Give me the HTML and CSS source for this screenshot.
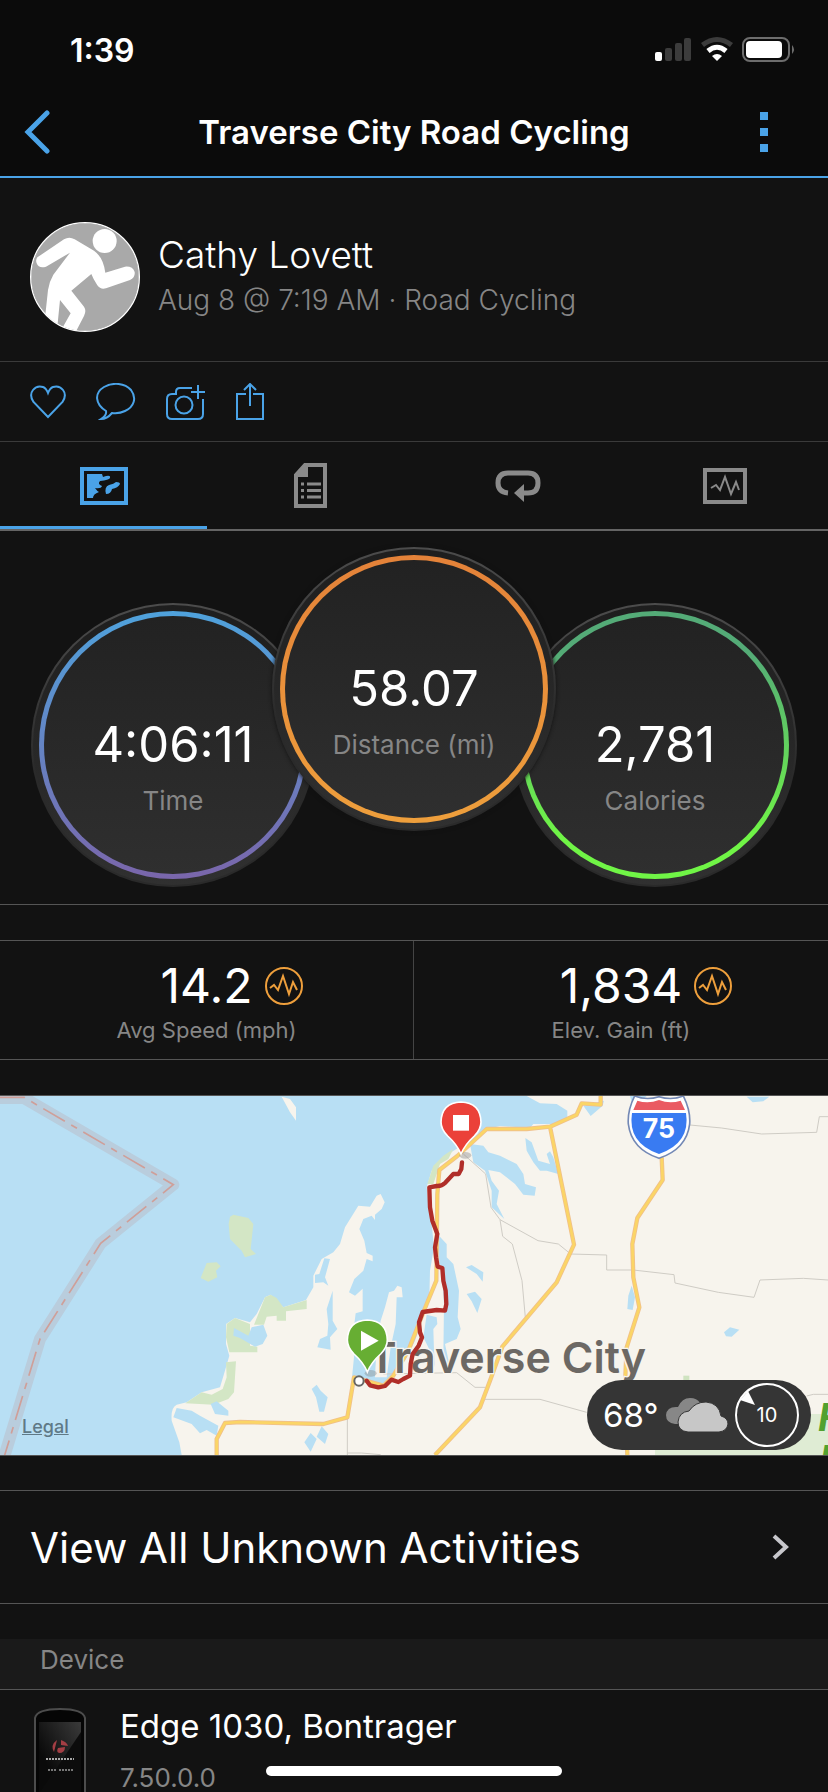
FILE: index.html
```html
<!DOCTYPE html>
<html lang="en">
  <head>
    <meta charset="UTF-8" />
    <meta name="viewport" content="width=device-width, initial-scale=1.0" />
    <title>Traverse City Road Cycling</title>
    <link rel="stylesheet" href="styles.css">
  </head>
  <body>
    <header>
      <!-- Status bar -->
      <div class="status-bar">
        <span class="clock">1:39</span>
        <svg width="142" height="28" viewBox="0 0 142 28">
          <rect x="1" y="16" width="7" height="9" rx="2" fill="#fff" />
          <g fill="#3c3c3c">
            <rect x="11" y="12" width="7" height="13" rx="2" />
            <rect x="21" y="7" width="7" height="18" rx="2" />
            <rect x="30" y="2" width="7" height="23" rx="2" />
          </g>
          <path d="M48.500 9Q63 -2 77.500 9" fill="none" stroke="#3c3c3c" stroke-width="5" />
          <path d="M54 15Q63 7.500 72 15" fill="none" stroke="#fff" stroke-width="5" />
          <path d="M63 25L58 20Q63 16 68 20Z" fill="#fff" />
          <rect x="89" y="2" width="46" height="23" rx="7" fill="none" stroke="#6d6d6d" stroke-width="2" />
          <rect x="92" y="5" width="36" height="17" rx="4" fill="#fff" />
          <path d="M138 9q4 4.500 0 9z" fill="#6d6d6d" />
        </svg>
      </div>
      <!-- Title bar -->
      <nav class="title-bar">
        <button class="icon-btn" aria-label="Back">
          <svg width="26" height="44" viewBox="0 0 26 44">
            <path d="M23 3L4 22L23 41" fill="none" stroke="#4aa3e8" stroke-width="5" stroke-linecap="round" />
          </svg>
        </button>
        <h1>Traverse City Road Cycling</h1>
        <button class="icon-btn" aria-label="More">
          <svg width="8" height="40" viewBox="0 0 8 40">
            <path d="M0 0h8v8H0zM0 16h8v8H0zM0 32h8v8H0z" fill="#4aa3e8" />
          </svg>
        </button>
      </nav>
    </header>

    <main>
      <section class="profile">
        <svg class="avatar" width="110" height="110" viewBox="30 36 330 330">
          <defs>
            <clipPath id="avatar-clip"><circle cx="195" cy="201" r="162" /></clipPath>
          </defs>
          <circle cx="195" cy="201" r="162" fill="#a9a9a9" />
          <g clip-path="url(#avatar-clip)" fill="#fff">
            <circle cx="254" cy="93" r="36" />
            <path d="M52 142L132 88Q148 78 164 88L222 122Q250 142 256 188L315 170Q338 168 344 186Q346 202 330 210L258 235Q242 240 232 226Q220 208 214 192L154 242L192 290Q200 302 192 318L165 370H118L152 310L120 270L114 330L110 370H70L84 240Q88 214 100 194L150 128L78 170Q56 176 50 160Q46 150 52 142Z" />
          </g>
          <circle cx="195" cy="201" r="163" fill="none" stroke="#fff" stroke-width="4" />
        </svg>
        <div>
          <h2>Cathy Lovett</h2>
          <p>Aug 8 @ 7:19 AM · Road Cycling</p>
        </div>
      </section>

      <!-- Like, comment, photo, share -->
      <section class="actions">
        <button aria-label="Like">
          <svg width="36" height="38" viewBox="0 0 36 38">
            <path d="M18 34L3.500 19Q-1 12 3 7Q7 2 13 4Q16 5 18 10Q20 5 23 4Q29 2 33 7Q37 12 32.500 19Z" />
          </svg>
        </button>
        <button aria-label="Comment">
          <svg width="40" height="38" viewBox="0 0 40 38">
            <path d="M10 28C-1 21 -2 10 8 4C17 -1 29 0 35 7C41 15 38 24 29 28Q23 31 16 30Q11 36 5 36Q11 32 10 28Z" />
          </svg>
        </button>
        <button aria-label="Add photo">
          <svg width="40" height="38" viewBox="2 0 40 38">
            <path d="M28 5H16Q12 5 12 9V11H8Q3 11 3 16V31Q3 36 8 36H34Q39 36 39 31V16M34 2V16M27 9H41" />
            <circle cx="20" cy="22" r="8.500" />
          </svg>
        </button>
        <button aria-label="Share">
          <svg width="28" height="38" viewBox="0 0 28 38">
            <path d="M10 11H1V36H27V11H17M14 23V1M8 7L14 1L20 7" />
          </svg>
        </button>
      </section>

      <!-- Tabs -->
      <section class="tabs">
        <button class="active" aria-label="Map">
          <svg width="48" height="38" viewBox="0 0 48 38">
            <path d="M2 2H46V36H2Z" fill="none" stroke="currentColor" stroke-width="4" />
            <path d="M7 7H22L23 10Q31 7 30 11Q29 13 20 14Q17 17 22 19Q21 22 15 21Q17 24 19 25Q13 27 13 31H7ZM40 17Q38 21 32 22Q31 27 26 27Q24 20 29 18Q34 17 36 15Q40 15 40 17Z" fill="currentColor" />
          </svg>
        </button>
        <button aria-label="Details">
          <svg width="34" height="46" viewBox="0 0 34 46">
            <path d="M11 2H31V43H2V12Z" fill="none" stroke="currentColor" stroke-width="4" />
            <path d="M11 1H14V14H1V11Z" fill="currentColor" />
            <path d="M13 21H27M13 27.500H27M13 34H27M7 21H10M7 27.500H10M7 34H10" stroke="currentColor" stroke-width="3" />
          </svg>
        </button>
        <button aria-label="Laps">
          <svg width="46" height="32" viewBox="0 0 46 32">
            <path d="M13 23Q3 22 3 13Q3 3 13 3H33Q43 3 43 13Q43 23 33 23H28" fill="none" stroke="currentColor" stroke-width="5" />
            <path d="M19 23L29 14V32Z" fill="currentColor" />
          </svg>
        </button>
        <button aria-label="Charts">
          <svg width="44" height="36" viewBox="0 0 44 36">
            <path d="M2 2H42V34H2Z" fill="none" stroke="currentColor" stroke-width="4" />
            <path d="M8 20L13 17L17 22L22 9L28 26L33 14L36 22" fill="none" stroke="currentColor" stroke-width="2" />
          </svg>
        </button>
      </section>

      <section class="dials">
        <div class="dial time">
          <div class="ring"><strong>4:06:11</strong><span>Time</span></div>
        </div>
        <div class="dial distance">
          <div class="ring"><strong>58.07</strong><span>Distance (mi)</span></div>
        </div>
        <div class="dial calories">
          <div class="ring"><strong>2,781</strong><span>Calories</span></div>
        </div>
      </section>

      <section class="stats">
        <div class="stat">
          <strong>14.2</strong>
          <svg width="38" height="38" viewBox="0 0 38 38">
            <circle cx="19" cy="19" r="18" />
            <path d="M5 21L9 18L13 23L18 9L24 27L28 15L32 23" />
          </svg>
          <span>Avg Speed (mph)</span>
        </div>
        <div class="stat">
          <strong>1,834</strong>
          <svg width="38" height="38" viewBox="0 0 38 38">
            <circle cx="19" cy="19" r="18" />
            <path d="M5 21L9 18L13 23L18 9L24 27L28 15L32 23" />
          </svg>
          <span>Elev. Gain (ft)</span>
        </div>
      </section>

      <section class="map">
        <svg class="map-canvas" viewBox="0 16 2484 1077">
          <rect class="water" x="0" y="16" width="2484" height="1077" />
          <!-- Mainland -->
          <path class="land" d="M545 1093L538 1055L515 990Q512 950 530 942L560 935L605 905L660 890L672 850L688 795L678 760V700L705 682L750 695L770 670L795 620L812 612L850 650L918 628L940 590V555L965 505L1000 485L1020 460L1035 410L1075 345L1110 348L1130 315L1142 310L1154 335L1145 355L1125 372V388L1115 375L1090 385L1078 415L1093 450L1100 487L1118 495V512L1100 505L1090 540L1063 565L1047 605L1065 615L1088 594V662L1067 668L1058 740L1062 800L1056 860L1100 872L1150 885L1180 855L1215 810L1245 750L1270 680L1288 620L1290 540L1302 470L1295 400L1285 340L1280 290L1295 240L1345 190L1385 165L1415 160L1450 118L1500 106L1590 112L1600 100L1680 100L1702 80V60L1670 40L1620 38L1580 16H2484V1093Z" />
          <path class="land" d="M1192 585L1205 590L1208 620L1190 620L1187 700L1172 770L1160 860H1125L1130 760L1142 690L1155 650L1167 605L1182 600ZM845 18L870 25L888 50V90L870 65Z" />
          <!-- Parks -->
          <path class="park" d="M690 378L700 372L745 382L760 400L752 475L768 490L735 500L725 480L690 445L686 400ZM620 517L650 515L662 527L648 540L652 560L625 573L602 562ZM795 620L812 612L830 622L850 650L920 628V655L858 662V690H830V675L800 678L792 702H762ZM680 700L705 682L750 700V765L772 768V785H688L678 740ZM678 815L708 812L702 905L685 925L640 942L556 938L605 905L635 912L668 895L680 860ZM1360 175L1345 205L1320 220L1300 280H1282L1300 225L1330 195Z" />
          <path d="M1965 970H2484V1093H1965Z" fill="#dfecd4" />
          <path d="M1965 960H2385V1093H2230L1965 1000Z" fill="#f7f4ed" />
          <path d="M1965 1060H2484V1093H1965Z" fill="#dfecd4" />
          <path d="M2050 855h18v15h-18z" fill="#cfe3c0" />
          <!-- Inland lakes -->
          <path class="water" d="M520 980L530 952L575 960L600 975L655 1005L650 1035L620 1018L600 1028L575 1000ZM632 940L650 932L685 960V975L645 970ZM702 712L745 735L755 710L790 702L802 735L788 760L765 768L720 742L700 735ZM973 503L990 505L975 560L985 585L970 575L945 577V552L958 550ZM998 600V690L1012 715L990 740L992 777L952 770L960 745L982 735L985 700L980 655ZM935 895L950 882L962 900L983 920L972 963H958L948 920ZM932 1027L950 1045L932 1083L913 1055ZM965 1007L985 1030L975 1060L950 1038Z" />
          <path class="water" d="M1410 160L1450 165L1465 185L1500 195L1550 220L1570 250L1575 280L1608 290L1604 315L1570 312L1545 280L1500 245L1465 238L1475 270L1497 300L1490 340L1513 385L1475 350L1475 300L1455 240L1420 215ZM1576 142L1595 155L1615 210L1650 220L1640 190L1650 182L1660 200L1675 250L1640 240L1620 240L1600 215L1580 180ZM1750 45L1812 30L1808 45L1772 76ZM2240 18H2308L2290 32L2258 35ZM1890 16H1940L1900 50ZM1312 430L1340 460V500L1360 520L1377 600L1373 680L1382 715L1370 745L1335 760L1350 830L1330 800L1332 640L1325 530L1308 500ZM1280 672L1310 680L1312 700L1300 715L1302 780L1305 830L1290 780L1270 740ZM1398 530L1415 523L1450 545L1448 573L1430 550ZM1400 610L1425 603L1445 625L1432 667L1415 632ZM1895 585L1905 620L1898 658L1882 655L1885 615ZM2172 725L2190 710L2218 717L2195 738L2178 737Z" />
          <!-- State boundary -->
          <path d="M0 22H72L520 282L302 458L120 745L12 1100" fill="none" stroke="#b9cddd" stroke-width="36" stroke-linejoin="round" />
          <path d="M0 20H72L520 282L302 458L120 745L12 1100" fill="none" stroke="#cf9f99" stroke-width="5" stroke-dasharray="75 22 20 22" />
          <!-- Minor roads -->
          <path class="minor" d="M1042 975V1093M1042 1087H1084L1142 1092M1390 190L1457 250L1473 350L1500 387L1614 450L1675 460L1712 490L1820 493V538H1900L2022 552L2025 577L2155 605L2262 620L2280 568L2410 563L2484 568M1500 387L1508 437L1537 460L1566 570L1576 680M1150 850L1370 846L1425 890H1455M1455 926H1620L1760 965M2070 103L2165 112L2285 130L2450 125L2458 78H2484M2420 916L2440 911H2484" />
          <!-- Highways -->
          <path class="road-edge" d="M650 1093V1045L675 997L720 994L970 1000L1042 980L1062 860L1150 885L1180 855L1225 780L1280 640L1309 570L1312 310L1318 238L1372 196L1460 115H1580L1650 108L1730 72L1745 38L1802 42V16M1650 108L1722 462L1670 575L1507 768L1470 870L1440 950L1305 1093M1985 200L1988 268L1912 382L1897 460L1900 560L1918 650L1880 770L1875 880L1882 1093" />
          <path class="road" d="M650 1093V1045L675 997L720 994L970 1000L1042 980L1062 860L1150 885L1180 855L1225 780L1280 640L1309 570L1312 310L1318 238L1372 196L1460 115H1580L1650 108L1730 72L1745 38L1802 42V16M1650 108L1722 462L1670 575L1507 768L1470 870L1440 950L1305 1093M1985 200L1988 268L1912 382L1897 460L1900 560L1918 650L1880 770L1875 880L1882 1093" />
          <!-- Interstate shield -->
          <path d="M1904 16Q1940 30 1977 18Q2014 30 2050 16Q2072 60 2069 100Q2060 175 1977 203Q1894 175 1885 100Q1882 60 1904 16Z" fill="#fff" stroke="#7388b5" stroke-width="5" />
          <path d="M1912 30Q1945 40 1977 28Q2009 40 2042 30L2055 58H1900Z" fill="#ea5a62" />
          <path d="M1896 67H2058Q2072 157 1977 190Q1882 157 1896 67Z" fill="#397bf2" />
          <text class="shield-text" x="1977" y="143">75</text>
          <!-- Ride -->
          <text class="city" x="1105" y="846">Traverse City</text>
          <path class="route" d="M1386 215L1384 235L1376 250L1360 250L1335 277Q1325 287 1310 286L1288 290L1290 350L1297 390L1312 430L1305 470L1308 500L1313 528L1327 532L1330 570L1337 600L1339 640L1335 660L1310 658L1268 664L1257 695L1260 725L1266 740L1256 765L1238 790L1232 820L1230 855L1210 865L1195 874L1174 867L1155 886L1135 890L1110 884L1100 870" />
          <circle cx="1077" cy="871" r="14" fill="#fff" stroke="#666" stroke-width="6" />
          <ellipse cx="1112" cy="848" rx="18" ry="10" fill="#8886" />
          <path d="M1102 844Q1090 815 1062 790Q1042 770 1042 748Q1044 690 1102 688Q1160 690 1162 748Q1162 770 1142 790Q1114 815 1102 844Z" fill="#67ae33" stroke="#fff" stroke-width="5" />
          <path d="M1083 720L1136 750L1083 780Z" fill="#fff" />
          <ellipse cx="1396" cy="194" rx="18" ry="10" fill="#8886" />
          <path d="M1383 190Q1371 161 1343 136Q1323 116 1323 94Q1325 36 1383 34Q1441 36 1443 94Q1443 116 1423 136Q1395 161 1383 190Z" fill="#eb4139" stroke="#fff" stroke-width="5" />
          <path d="M1359 73H1407V120H1359Z" fill="#fff" />
          <text class="forest" x="2454" y="1022">F</text>
          <text class="forest" x="2458" y="1148">F</text>
        </svg>
        <a class="legal" href="#">Legal</a>
        <div class="weather">
          <span class="temp">68°</span>
          <svg width="62" height="36" viewBox="0 0 62 36">
            <path d="M9 27Q0 26 0 18Q1 9 12 10Q16 1 24 1Q31 1 34 6L22 27Z" fill="#878787" />
            <path d="M22 35Q12 34 12 25Q13 15 23 14Q29 5 40 5Q53 6 55 19Q62 21 62 27Q61 34 53 35Z" fill="#c7c7c7" stroke="#353535" stroke-width="1" />
          </svg>
          <div class="wind">
            <svg width="64" height="64" viewBox="0 0 64 64">
              <circle cx="32" cy="32" r="31" fill="none" stroke="#fff" stroke-width="2" />
              <path d="M13 8L20 22L5 17Z" fill="#fff" />
            </svg>
            <span>10</span>
          </div>
        </div>
      </section>

      <a class="view-all" href="#">
        View All Unknown Activities
        <svg width="18" height="26" viewBox="0 0 18 26">
          <path d="M2 2L14 13L2 24" fill="none" stroke="#c7c7cc" stroke-width="4" />
        </svg>
      </a>

      <h3>Device</h3>
      <section class="device">
        <svg width="52" height="100" viewBox="0 0 52 100">
          <defs>
            <linearGradient id="glass" x1="0" y1="1" x2="1" y2="0">
              <stop offset="0.3" stop-color="#0a0a0a" />
              <stop offset="1" stop-color="#3a3a3a" />
            </linearGradient>
          </defs>
          <path d="M1 100V10Q3 1 26 1Q49 1 51 10V100" fill="#050505" stroke="#4c4c4c" stroke-width="2" />
          <path d="M5 14H47V100H5Z" fill="#0c0c0c" />
          <path d="M5 14H47V24L5 86Z" fill="url(#glass)" />
          <path d="M23 32L20 44Q16 37 23 32ZM27 32Q33 34 34 38L27 37ZM24 40L31 39Q31 45 25 45Q22 44 24 40Z" fill="#a33e44" />
          <path d="M12 51H40" stroke="#aaa" stroke-width="2" stroke-dasharray="2 1" />
          <path d="M14 62H22M25 62H39" stroke="#777" stroke-width="2" stroke-dasharray="2 1" />
        </svg>
        <div>
          <h4>Edge 1030, Bontrager</h4>
          <p>7.50.0.0</p>
        </div>
      </section>
    </main>

    <div class="home-bar"></div>
  </body>
</html>
```
FILE: styles.css
```css
* {
  box-sizing: border-box;
  margin: 0;
  padding: 0;
}
body {
  height: 100vh;
  overflow: hidden; /* Page is cut off behind the home bar */
  background-color: #121212;
  color: white;
  font-family: Inter, "Liberation Sans", sans-serif;
}
button {
  background: none;
  border: none;
  cursor: pointer;
}
svg {
  display: block;
}
a {
  color: white;
  text-decoration: none;
}

/* Header */
header {
  background-color: #0b0b0b;
  border-bottom: 2px solid #4aa3e8;
}
.status-bar {
  display: flex;
  justify-content: space-between;
  align-items: center;
  height: 88px;
  padding: 12px 32px 0 70px;
}
.clock {
  font-size: 32px;
  font-weight: 600;
}
.title-bar {
  display: flex;
  justify-content: space-between;
  align-items: center;
  height: 88px;
  padding: 0 24px;
}
.icon-btn {
  display: flex;
  width: 80px;
}
.icon-btn:last-child {
  justify-content: center;
}
h1 {
  font-size: 33px;
  font-weight: 600;
}

/* Profile */
.profile {
  display: flex;
  align-items: center;
  gap: 18px;
  height: 184px;
  padding: 14px 30px 0;
  border-bottom: 1px solid #3a3a3a;
}
h2 {
  font-size: 37px;
  font-weight: 300;
  line-height: 46px;
}
.profile p {
  color: #868686;
  font-size: 28px;
  font-weight: 300;
  line-height: 44px;
}
.actions {
  display: flex;
  align-items: center;
  gap: 30px;
  height: 80px;
  padding: 0 30px;
  border-bottom: 1px solid #3a3a3a;
}
.actions svg {
  fill: none;
  stroke: #4aa3e8;
  stroke-width: 2;
}

/* Tabs */
.tabs {
  display: grid;
  grid-template-columns: repeat(4, 1fr);
  height: 89px;
  border-bottom: 2px solid #646464;
}
.tabs button {
  display: flex;
  justify-content: center;
  align-items: center;
  color: #8a8a8a;
}
.tabs .active {
  color: #4aa3e8;
  box-shadow: inset 0 -3px #4aa3e8;
}

/* Dials */
.dials {
  display: flex;
  justify-content: center;
  align-items: flex-end;
  height: 374px;
  padding-bottom: 17px;
  border-bottom: 1px solid #555;
}
.dial {
  width: 284px;
  height: 284px;
  padding: 6px;
  border: 2px solid transparent;
  border-radius: 50%;
  background: linear-gradient(#1e1e1e, #303030) padding-box,
    linear-gradient(#4c4c4c, #2a2a2a 60%) border-box;
}
.ring {
  display: flex;
  flex-direction: column;
  align-items: center;
  width: 268px;
  height: 268px;
  padding-top: 99px;
  border: 5px solid transparent;
  border-radius: 50%;
}
.ring strong {
  font-size: 49px;
  font-weight: 400;
  line-height: 60px;
}
.ring span {
  margin-top: 10px;
  color: #868686;
  font-size: 26px;
  line-height: 32px;
}
.time .ring {
  background: linear-gradient(#222, #2f2f2f) padding-box,
    linear-gradient(#4fa2dc, #7a66ab) border-box;
}
.distance {
  position: relative;
  margin: 0 -43px 56px;
  box-shadow: 0 0 4px #111;
}
.distance .ring {
  background: linear-gradient(#222, #2f2f2f) padding-box,
    linear-gradient(#e48239, #ee9f3c) border-box;
}
.calories .ring {
  background: linear-gradient(#222, #2f2f2f) padding-box,
    linear-gradient(#54ab77 15%, #70f546 85%) border-box;
}

/* Stats */
.stats {
  display: grid;
  grid-template-columns: 1fr 1fr;
  margin-top: 35px;
  border-top: 1px solid #555;
  border-bottom: 1px solid #555;
}
.stat {
  display: grid;
  grid-template-columns: 1fr auto 1fr;
  align-items: center;
  column-gap: 12px;
  height: 118px;
  padding: 15px 0;
}
.stat:first-child {
  border-right: 1px solid #444;
}
.stat strong {
  grid-column: 2;
  font-size: 48px;
  font-weight: 400;
  line-height: 60px;
}
.stat svg {
  fill: none;
  stroke: #ee9f3c;
  stroke-width: 2;
}
.stat span {
  grid-column: 1 / 4;
  color: #868686;
  font-size: 22px;
  line-height: 28px;
  text-align: center;
}

/* Map */
.map {
  position: relative;
  margin: 35px 0 34px;
  border-top: 1px solid #555;
  border-bottom: 1px solid #555;
}
.map-canvas {
  width: 100%;
}
.water {
  fill: #b8dff4;
}
.land {
  fill: #f7f4ed;
}
.park {
  fill: #d3e6c5;
}
.minor {
  fill: none;
  stroke: #cfccc5;
  stroke-width: 3;
}
.road,
.road-edge {
  fill: none;
  stroke: #f0c08a;
  stroke-width: 13;
  stroke-linejoin: round;
}
.road {
  stroke: #fbd566;
  stroke-width: 8;
}
.route {
  fill: none;
  stroke: #b02e29;
  stroke-width: 13;
  stroke-linecap: round;
  stroke-linejoin: round;
}
.city {
  fill: #6c6864;
  stroke: #f7f4ed;
  stroke-width: 8;
  paint-order: stroke;
  font-size: 129px;
  font-weight: 600;
}
.shield-text {
  fill: white;
  font-size: 80px;
  font-weight: 700;
  text-anchor: middle;
}
.forest {
  fill: #52a12f;
  font-size: 116px;
  font-style: italic;
  font-weight: 700;
}
.legal {
  position: absolute;
  left: 22px;
  bottom: 18px;
  color: #5f7986;
  font-size: 18px;
  font-weight: 500;
  text-decoration: underline;
}
.weather {
  position: absolute;
  right: 17px;
  bottom: 5px;
  display: flex;
  align-items: center;
  justify-content: space-between;
  width: 224px;
  height: 70px;
  padding: 0 12px 0 16px;
  border-radius: 35px;
  background-color: #353535;
}
.temp {
  font-size: 33px;
}
.wind {
  display: grid;
  place-items: center;
}
.wind svg,
.wind span {
  grid-area: 1 / 1;
}
.wind span {
  font-size: 20px;
}

/* Links and device */
.view-all {
  display: flex;
  justify-content: space-between;
  align-items: center;
  height: 114px;
  padding: 0 38px 0 30px;
  border-top: 1px solid #555;
  border-bottom: 1px solid #555;
  font-size: 42px;
}
h3 {
  height: 51px;
  margin-top: 35px;
  padding-left: 40px;
  border-bottom: 1px solid #555;
  background-color: #1a1a1a;
  color: #868686;
  font-size: 26px;
  font-weight: 400;
  line-height: 42px;
}
.device {
  display: flex;
  gap: 34px;
  padding: 18px 34px;
}
h4 {
  font-size: 33px;
  font-weight: 400;
  line-height: 36px;
}
.device p {
  margin-top: 18px;
  color: #868686;
  font-size: 26px;
  line-height: 32px;
}
.home-bar {
  position: fixed;
  left: 50%;
  bottom: 16px;
  width: 296px;
  height: 10px;
  margin-left: -148px;
  border-radius: 5px;
  background-color: white;
}
```
